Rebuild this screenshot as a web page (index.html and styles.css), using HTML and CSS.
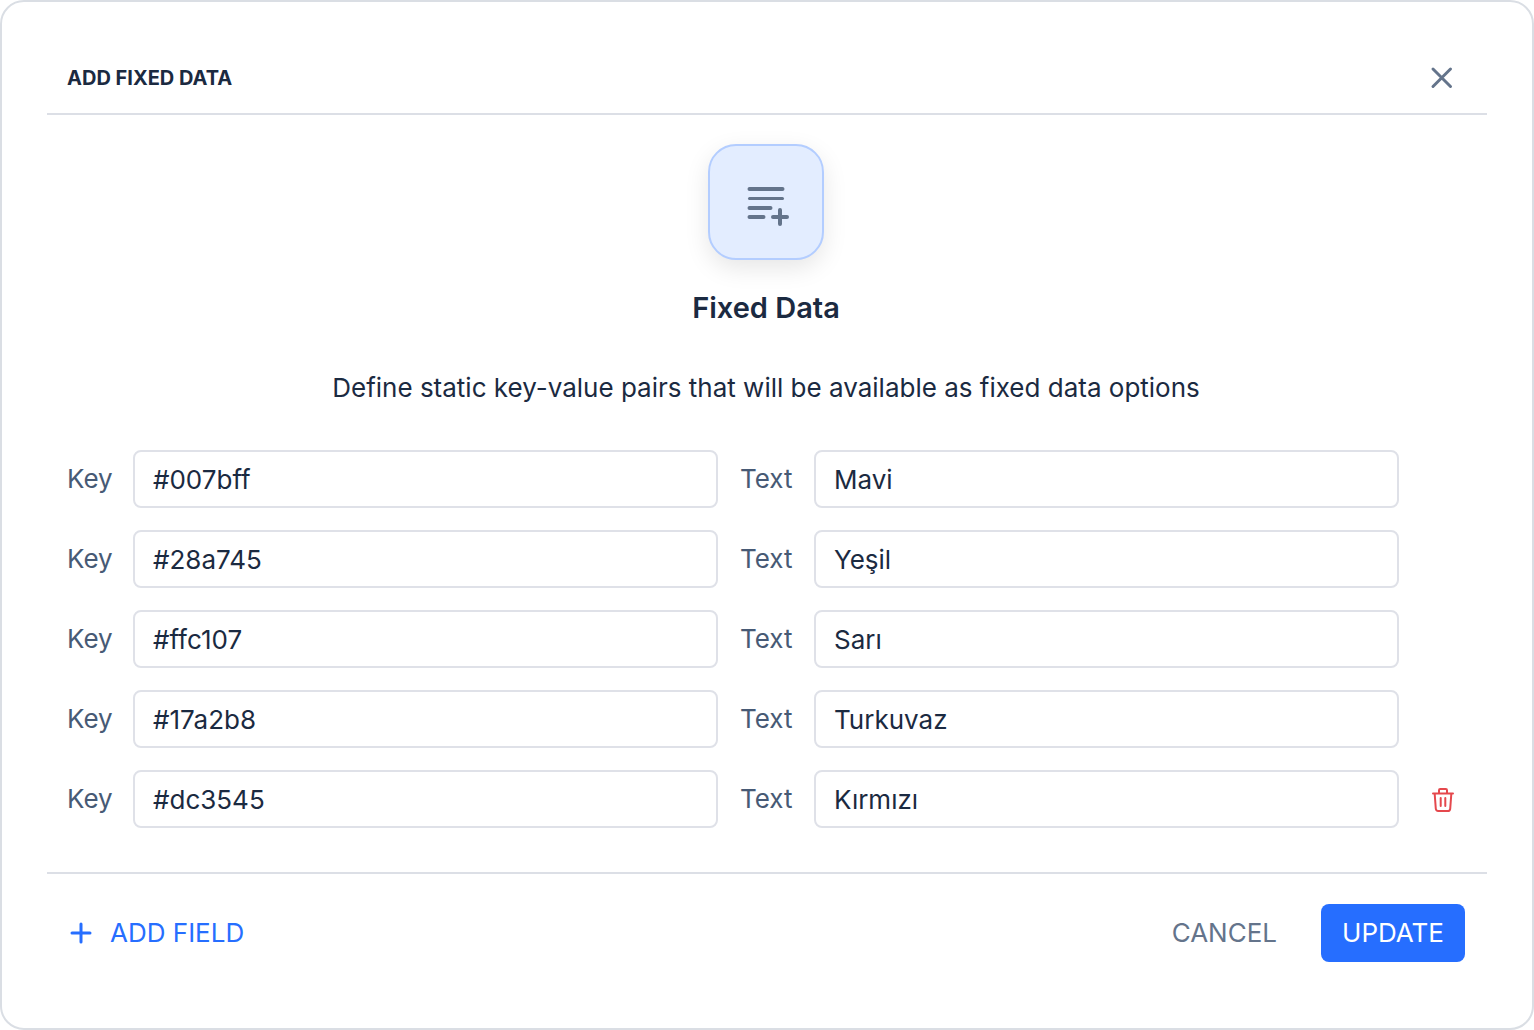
FILE: index.html
```html
<!DOCTYPE html>
<html lang="en">
<head>
<meta charset="utf-8">
<meta name="viewport" content="width=device-width, initial-scale=1">
<title>Add Fixed Data</title>
<link rel="stylesheet" href="styles.css">
</head>
<body>
<main class="dialog" role="dialog" aria-labelledby="dialog-title">
  <header class="dialog-header">
    <h1 class="dialog-title" id="dialog-title">ADD FIXED DATA</h1>
    <button class="icon-button" type="button" aria-label="Close">
      <svg class="close-icon" width="24" height="24" viewBox="0 0 24 24"><path d="M3 3 20.500 20.500M20.500 3 3 20.500"/></svg>
    </button>
  </header>
  <form class="dialog-form">
    <section class="intro">
      <div class="badge">
        <svg class="list-icon" width="48" height="48" viewBox="0 0 48 48"><path d="M7.500 11H40.500M7.500 30H28.500M7.500 39H21.500M31 39H45M38 32V46"/><path class="thin" d="M7.500 20.500H40.500"/></svg>
      </div>
      <h2 class="intro-title">Fixed Data</h2>
      <p class="intro-text">Define static key-value pairs that will be available as fixed data options</p>
    </section>
    <section class="rows">
      <div class="row">
        <label for="key1">Key</label><input class="field" id="key1" type="text" value="#007bff">
        <label for="text1">Text</label><input class="field" id="text1" type="text" value="Mavi">
      </div>
      <div class="row">
        <label for="key2">Key</label><input class="field" id="key2" type="text" value="#28a745">
        <label for="text2">Text</label><input class="field" id="text2" type="text" value="Yeşil">
      </div>
      <div class="row">
        <label for="key3">Key</label><input class="field" id="key3" type="text" value="#ffc107">
        <label for="text3">Text</label><input class="field" id="text3" type="text" value="Sarı">
      </div>
      <div class="row">
        <label for="key4">Key</label><input class="field" id="key4" type="text" value="#17a2b8">
        <label for="text4">Text</label><input class="field" id="text4" type="text" value="Turkuvaz">
      </div>
      <div class="row">
        <label for="key5">Key</label><input class="field" id="key5" type="text" value="#dc3545">
        <label for="text5">Text</label><input class="field" id="text5" type="text" value="Kırmızı">
        <button class="icon-button" type="button" aria-label="Delete row">
          <svg class="trash-icon" width="24" height="26" viewBox="0 0 24 26"><path d="M2 7.500H22M8 7V4.200Q8 3 9.200 3H14.800Q16 3 16 4.200V7M3.700 8 4.800 22.800Q5 25 7.200 25H16.800Q19 25 19.200 22.800L20.300 8M9.700 12V20M14.300 12V20"/></svg>
        </button>
      </div>
    </section>
    <footer class="dialog-footer">
      <button class="add-button" type="button">
        <svg class="plus-icon" width="24" height="24" viewBox="0 0 24 24"><path d="M3 12H21M12 3V21"/></svg>
        ADD FIELD
      </button>
      <div class="actions">
        <button class="cancel-button" type="button">CANCEL</button>
        <button class="update-button" type="submit">UPDATE</button>
      </div>
    </footer>
  </form>
</main>
</body>
</html>
```
FILE: styles.css
```css
* {
  box-sizing: border-box;
}

body {
  margin: 0;
  background: #fff;
  color: #1b2a41;
  font-family: Inter, "Liberation Sans", sans-serif;
  font-size: 26px;
  line-height: 32px;
}

h1, h2, p {
  margin: 0;
}

button, input {
  font: inherit;
}

button {
  padding: 0;
  border: 0;
  background: none;
  cursor: pointer;
}

svg {
  display: block;
  fill: none;
  stroke: currentColor;
  stroke-linecap: round;
  stroke-linejoin: round;
}

.dialog {
  min-height: 100vh;
  padding: 40px 45px 64px;
  border: 2px solid #dadee4;
  border-radius: 24px;
}

.dialog-header {
  display: flex;
  align-items: center;
  justify-content: space-between;
  padding: 14px 23px 13px 20px;
  border-bottom: 2px solid #dcdfe6;
}

.dialog-title {
  font-size: 20px;
  font-weight: 700;
}

.icon-button {
  display: grid;
  place-items: center;
  width: 44px;
  height: 44px;
  color: #e5484d;
}

.close-icon {
  color: #64748b;
  stroke-width: 3;
}

.intro {
  display: flex;
  flex-direction: column;
  align-items: center;
  padding: 29px 22px 46px 20px;
  text-align: center;
}

.badge {
  display: grid;
  place-items: center;
  width: 116px;
  height: 116px;
  border: 2px solid #b3cdff;
  border-radius: 28px;
  background: #e3edff;
  box-shadow: 0 8px 24px rgba(0, 0, 0, 0.1);
  color: #64748b;
}

.list-icon {
  stroke-width: 4;
}

.list-icon .thin {
  stroke-width: 3;
}

.intro-title {
  margin: 32px 0 48px;
  font-size: 29px;
  font-weight: 600;
}

.rows {
  display: grid;
  gap: 22px;
  padding: 0 22px 44px 20px;
}

.row {
  display: grid;
  grid-template-columns: 44px 1fr 52px 1fr 44px;
  gap: 22px;
  align-items: center;
  color: #475a75;
}

.field {
  width: 100%;
  min-width: 0;
  height: 58px;
  padding: 0 18px;
  border: 2px solid #dfe1e8;
  border-radius: 8px;
  background: #fff;
  color: #1b2a41;
}

.trash-icon {
  stroke-width: 2;
}

.dialog-footer {
  display: flex;
  align-items: center;
  justify-content: space-between;
  padding: 30px 22px 0;
  border-top: 2px solid #dcdfe6;
}

.add-button {
  display: flex;
  align-items: center;
  gap: 17px;
  color: #266eff;
}

.plus-icon {
  stroke-width: 3;
}

.actions {
  display: flex;
  gap: 44px;
}

.cancel-button {
  color: #64748b;
}

.update-button {
  height: 58px;
  padding: 0 21px;
  border-radius: 8px;
  background: #266eff;
  color: #fff;
}
```
